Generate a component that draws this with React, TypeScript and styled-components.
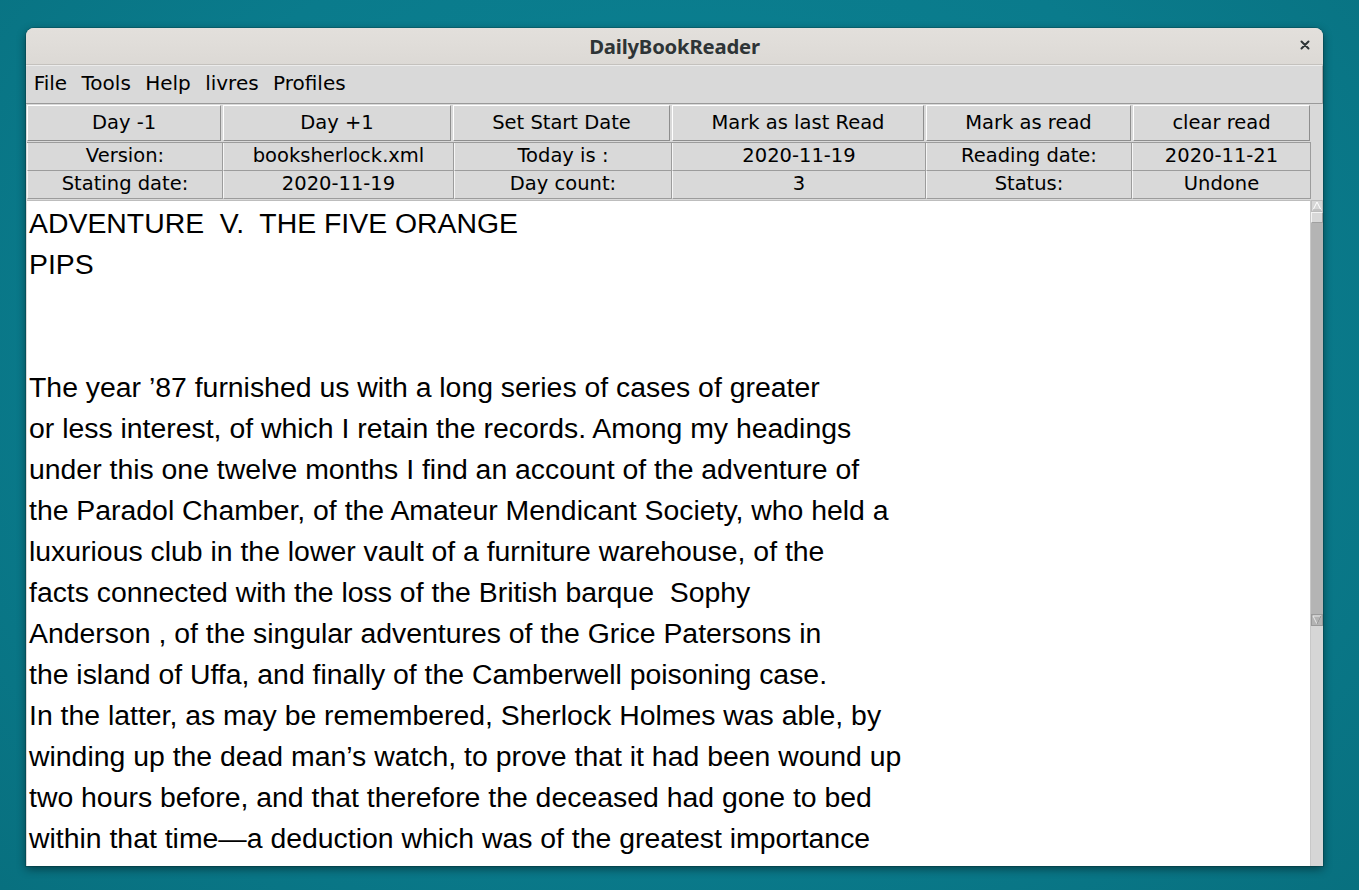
import React from "react";
import styled, { createGlobalStyle } from "styled-components";

const Global = createGlobalStyle`
  html, body { margin: 0; padding: 0; }
  body {
    width: 1359px;
    height: 890px;
    overflow: hidden;
    background: #0a7c8d;
    font-family: "DejaVu Sans", sans-serif;
  }
`;

const Desktop = styled.div`
  width: 1359px;
  height: 890px;
  box-sizing: border-box;
  padding: 28px 0 0 26px;
  background: radial-gradient(ellipse at 50% 40%, #0b8394 0%, #0a7b8c 60%, #08707f 100%);
`;

const Window = styled.div`
  width: 1297px;
  height: 838px;
  display: flex;
  flex-direction: column;
  border-radius: 8px 8px 0 0;
  overflow: hidden;
  background: #d9d9d9;
  box-shadow: 0 3px 10px rgba(0, 0, 0, 0.45), 0 0 0 1px rgba(0, 0, 0, 0.15);
`;

const TitleBar = styled.div`
  height: 36px;
  flex: none;
  position: relative;
  display: flex;
  align-items: center;
  justify-content: center;
  background: linear-gradient(#e3e0dc, #dcd9d5);
  border-bottom: 1px solid #c4c1bd;
`;

const Title = styled.span`
  font-family: "Noto Sans", "Open Sans", sans-serif;
  font-weight: 700;
  font-size: 20.3px;
  color: #2e3436;
  letter-spacing: -0.2px;
`;

const CloseButton = styled.div`
  position: absolute;
  right: 13px;
  top: 12px;
  width: 10px;
  height: 10px;
  display: flex;
`;

const MenuBar = styled.div`
  height: 37px;
  flex: none;
  display: flex;
  align-items: center;
  padding-left: 0.5px;
  background: #d9d9d9;
  border-top: 1px solid #ececec;
  border-bottom: 1px solid #9a9a9a;
  border-right: 1px solid #a8a8a8;
`;

const MenuItem = styled.span`
  padding: 0 7.2px 2px;
  font-size: 20px;
  color: #000;
  line-height: 35px;
`;

const Content = styled.div`
  flex: 1;
  min-height: 0;
  display: flex;
  flex-direction: column;
  padding: 1px 0 0 1px;
`;

const ButtonRow = styled.div`
  display: grid;
  grid-template-columns: 194px 228px 217px 252px 205px 177px;
  column-gap: 2px;
  height: 36px;
  flex: none;
`;

const Button = styled.div`
  box-sizing: border-box;
  height: 36px;
  display: flex;
  align-items: center;
  justify-content: center;
  padding-bottom: 2px;
  background: #d9d9d9;
  border-top: 1px solid #ffffff;
  border-left: 1px solid #ffffff;
  border-right: 1px solid #8e8e8e;
  border-bottom: 1px solid #8e8e8e;
  font-size: 19.5px;
  color: #000;
`;

const InfoGrid = styled.div`
  margin-top: 1px;
  display: grid;
  grid-template-columns: 196px 231px 218px 254px 206px 179px;
  grid-auto-rows: 28px;
  flex: none;
  width: 1284px;
  border-top: 1px solid #9c9c9c;
`;

const Cell = styled.div`
  box-sizing: border-box;
  display: flex;
  align-items: center;
  justify-content: center;
  padding-bottom: 2px;
  background: #d9d9d9;
  border-left: 1px solid #f6f6f6;
  border-right: 1px solid #9c9c9c;
  border-bottom: 1px solid #9c9c9c;
  font-size: 19.5px;
  color: #000;
  line-height: 1;
`;

const TextArea = styled.div`
  margin-top: 1px;
  flex: 1;
  min-height: 0;
  display: flex;
`;

const Page = styled.div`
  flex: none;
  width: 1283px;
  background: #ffffff;
  overflow: hidden;
  padding: 2px 0 0 2px;
  box-sizing: border-box;
  border-top: 1px solid #bdbdbd;
`;

const Line = styled.div`
  font-family: "Liberation Sans", Arial, sans-serif;
  font-size: 28.4px;
  line-height: 41px;
  height: 41px;
  white-space: pre;
  color: #000;
`;

const ScrollBar = styled.div`
  width: 12px;
  flex: none;
  display: flex;
  flex-direction: column;
  background: #d6d6d6;
  border-left: 1px solid #c8c8c8;
`;

const ArrowBox = styled.div<{ $dark?: boolean }>`
  height: 12px;
  flex: none;
  box-sizing: border-box;
  background: ${(p) => (p.$dark ? "#b3b3b3" : "#d6d6d6")};
  border: 1px solid ${(p) => (p.$dark ? "#9a9a9a" : "#bcbcbc")};
  display: flex;
  align-items: center;
  justify-content: center;
`;

const Thumb = styled.div`
  height: 11px;
  flex: none;
  box-sizing: border-box;
  background: #d8d8d8;
  border: 1px solid #a0a0a0;
  border-top-color: #f4f4f4;
  border-left-color: #f4f4f4;
`;

const Track = styled.div`
  height: 391px;
  flex: none;
  background: #b4b4b4;
`;

const lines = [
  "ADVENTURE  V.  THE FIVE ORANGE",
  "PIPS",
  "",
  "",
  "The year \u201987 furnished us with a long series of cases of greater",
  "or less interest, of which I retain the records. Among my headings",
  "under this one twelve months I find an account of the adventure of",
  "the Paradol Chamber, of the Amateur Mendicant Society, who held a",
  "luxurious club in the lower vault of a furniture warehouse, of the",
  "facts connected with the loss of the British barque  Sophy",
  "Anderson , of the singular adventures of the Grice Patersons in",
  "the island of Uffa, and finally of the Camberwell poisoning case.",
  "In the latter, as may be remembered, Sherlock Holmes was able, by",
  "winding up the dead man\u2019s watch, to prove that it had been wound up",
  "two hours before, and that therefore the deceased had gone to bed",
  "within that time\u2014a deduction which was of the greatest importance",
];

const buttons = ["Day -1", "Day +1", "Set Start Date", "Mark as last Read", "Mark as read", "clear read"];
const info = [
  "Version:", "booksherlock.xml", "Today is :", "2020-11-19", "Reading date:", "2020-11-21",
  "Stating date:", "2020-11-19", "Day count:", "3", "Status:", "Undone",
];
const menus = ["File", "Tools", "Help", "livres", "Profiles"];

export default function App() {
  return (
    <>
      <Global />
      <Desktop>
        <Window>
          <TitleBar>
            <Title>DailyBookReader</Title>
            <CloseButton>
              <svg width="10" height="10" viewBox="0 0 10 10">
                <path d="M1.5 1.5 L8.5 8.5 M8.5 1.5 L1.5 8.5" stroke="#2e3436" strokeWidth="2" strokeLinecap="round" />
              </svg>
            </CloseButton>
          </TitleBar>
          <MenuBar>
            {menus.map((m) => (
              <MenuItem key={m}>{m}</MenuItem>
            ))}
          </MenuBar>
          <Content>
            <ButtonRow>
              {buttons.map((b) => (
                <Button key={b}>{b}</Button>
              ))}
            </ButtonRow>
            <InfoGrid>
              {info.map((c, i) => (
                <Cell key={i}>{c}</Cell>
              ))}
            </InfoGrid>
            <TextArea>
              <Page>
                {lines.map((l, i) => (
                  <Line key={i}>{l}</Line>
                ))}
              </Page>
              <ScrollBar>
                <ArrowBox>
                  <svg width="10" height="10" viewBox="0 0 10 10">
                    <path d="M5 1 L9 9 L1 9 Z" fill="#d6d6d6" stroke="#ffffff" strokeWidth="1" />
                    <path d="M9 9 L1 9" stroke="#9a9a9a" strokeWidth="1" />
                  </svg>
                </ArrowBox>
                <Thumb />
                <Track />
                <ArrowBox $dark>
                  <svg width="10" height="10" viewBox="0 0 10 10">
                    <path d="M1 1 L9 1 L5 9 Z" fill="#b3b3b3" stroke="#e8e8e8" strokeWidth="1" />
                    <path d="M9 1 L5 9" stroke="#8a8a8a" strokeWidth="1" />
                  </svg>
                </ArrowBox>
              </ScrollBar>
            </TextArea>
          </Content>
        </Window>
      </Desktop>
    </>
  );
}
